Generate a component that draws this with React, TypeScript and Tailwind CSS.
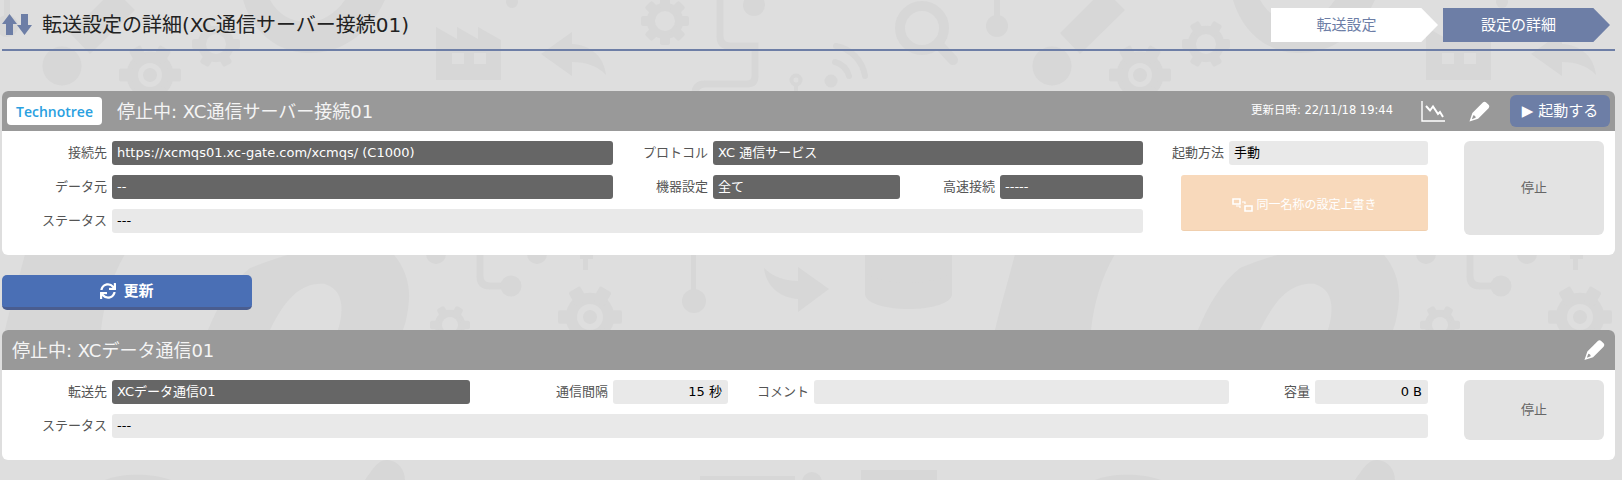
import type { ReactNode } from "react";
import { FaSync } from "react-icons/fa";

const FONT = "font-['DejaVu_Sans','Noto_Sans_CJK_JP',sans-serif]";

// 背景の透かし模様（横 990px で繰り返し）
function Gear({ x, y, r, hole, dot = 0, teeth = 6, rot = 0 }: { x: number; y: number; r: number; hole: number; dot?: number; teeth?: number; rot?: number }) {
  const w = r * 0.42;
  return (
    <g transform={`translate(${x} ${y})`}>
      <circle r={r * 0.76} fill="#d7d7d7" />
      {Array.from({ length: teeth }, (_, i) => (
        <rect
          key={i}
          x={-w / 2}
          y={-r}
          width={w}
          height={r * 0.5}
          rx={2}
          fill="#d7d7d7"
          transform={`rotate(${rot + (i * 360) / teeth})`}
        />
      ))}
      <circle r={hole} fill="#dedede" />
      {dot > 0 && <circle r={dot} fill="#d7d7d7" />}
    </g>
  );
}

function Tile() {
  return (
    <g fill="#d7d7d7" stroke="none">
      {/* 上段 */}
      <path d="M436 27 457 39V27L478 39V27L501 40V80H436Z" />
      <rect x="452" y="53" width="12" height="11" fill="#dedede" />
      <rect x="474" y="53" width="12" height="11" fill="#dedede" />
      <path d="M541 54 572 32V44C590 45 604 56 606 75 598 66 586 62 572 62V76Z" />
      <circle cx="512" cy="2" r="6" />
      <Gear x={665} y={21} r={24} hole={10} teeth={8} />
      <path d="M720 0V36Q720 46 730 46H755V76Q755 84 747 84H705Q695 84 695 94" fill="none" stroke="#d7d7d7" strokeWidth="7" />
      <circle cx="754" cy="5" r="11" />
      <circle cx="796" cy="80" r="6.5" />
      <circle cx="796" cy="80" r="2.5" fill="#dedede" />
      <rect x="794" y="84" width="4" height="8" />
      <circle cx="831" cy="81" r="6.5" />
      <path d="M835 62A20 20 0 0 1 849 76M836 46A36 36 0 0 1 865 76" fill="none" stroke="#d7d7d7" strokeWidth="6" strokeLinecap="round" />
      <circle cx="922" cy="28" r="22" fill="none" stroke="#d7d7d7" strokeWidth="10" />
      <path d="M940 46 953 60" stroke="#d7d7d7" strokeWidth="10" strokeLinecap="round" />
      <circle cx="997" cy="26" r="11" />
      <rect x="994" y="0" width="6" height="20" />
      <path d="M70 33 103 0H125L135 10 90 54Z" />
      <circle cx="62" cy="66" r="19.5" />
      <Gear x={150} y={75} r={31} hole={12} dot={7} rot={30} />
      <Gear x={216} y={44} r={24} hole={10} rot={30} />
      <path d="M243 0C252 30 275 53 310 53 340 53 368 36 385 0H345C335 14 322 22 308 22 290 22 278 14 270 0Z" />
      {/* 中段 */}
      <path d="M5 330C12 300 20 275 25 254H125C110 280 104 305 101 330Z" />
      <path d="M250 268C285 254 320 245 345 245H385C403 262 410 280 409 300 408 312 406 322 403 330H338C344 310 344 290 325 284 300 282 285 300 270 330H208C218 305 232 282 250 268Z" />
      <circle cx="436" cy="254" r="10" />
      <circle cx="537" cy="254" r="10" />
      <path d="M480 254V276Q480 286 490 286H508" fill="none" stroke="#d7d7d7" strokeWidth="7" />
      <circle cx="511" cy="286" r="10.5" />
      <rect x="583" y="254" width="5" height="16" />
      <rect x="580" y="254" width="13" height="5" />
      <Gear x={450} y={325} r={20} hole={8} rot={30} />
      <Gear x={590} y={317} r={32} hole={13} dot={7} rot={30} />
      <rect x="691" y="254" width="5" height="40" />
      <circle cx="694" cy="301" r="12" />
      <path d="M-192 267-161 289-192 312V299C-210 298-224 286-226 268-218 276-206 281-192 281Z" transform="translate(990 0)" />
      <path d="M-125 240H-38V276C-48 287-115 287-125 276Z" transform="translate(990 0)" />
      <path d="M-125 273C-105 286-58 286-38 273V294C-38 303-58 309-81 309-105 309-125 303-125 294Z" transform="translate(990 0)" />
      {/* 下段 */}
      <path d="M365 480C372 470 378 460 386 460 398 460 405 470 405 480Z" />
      <rect x="700" y="476" width="95" height="5" />
      <circle cx="812" cy="482" r="10" />
      <rect x="-129" y="470" width="76" height="12" />
      <path d="M105 480C118 474 150 472 171 480Z" />
    </g>
  );
}

function Watermark() {
  return (
    <svg className="absolute inset-0 -z-10" width="1622" height="480" aria-hidden="true">
      <defs>
        <g id="tile">
          <Tile />
        </g>
      </defs>
      <use href="#tile" x="0" />
      <use href="#tile" x="990" />
      <use href="#tile" x="-990" />
    </svg>
  );
}

function PencilIcon({ className }: { className: string }) {
  return (
    <svg viewBox="0 0 22 22" className={className} fill="currentColor" aria-hidden="true">
      <path
        d="M14.5 1.5C15.5.5 17 .5 18 1.5L20.5 4C21.5 5 21.5 6.5 20.5 7.5L9.5 18.5.5 21.5 3.5 12.5ZM4.5 15 3 19 7 17.5C7 16 6 15 4.5 15Z"
        fillRule="evenodd"
      />
    </svg>
  );
}

function ChartIcon() {
  return (
    <svg viewBox="0 0 24 21" className="h-[21px] w-[24px] text-white" fill="none" stroke="currentColor" aria-hidden="true">
      <path d="M1 0V20H24" strokeWidth="1.4" />
      <path d="M5 5 9 9.5 12 5.5 17 13 19 11 22 16" strokeWidth="2" />
    </svg>
  );
}

function UngroupIcon() {
  return (
    <svg viewBox="0 0 21 14" className="h-[14px] w-[21px] text-white" fill="none" stroke="currentColor" strokeWidth="1.6" aria-hidden="true">
      <path d="M1 1H8V6H1ZM13 8H20V13H13Z" />
      <path d="M4 8H8V10M10 4H13V6" strokeWidth="1.2" />
    </svg>
  );
}

function Label({ width, children }: { width: string; children: ReactNode }) {
  return <span className={`${width} shrink-0 pr-[5px] text-right text-[13px] leading-[24px] text-[#555]`}>{children}</span>;
}

function Field({ width, dark, right, children }: { width: string; dark?: boolean; right?: boolean; children?: ReactNode }) {
  return (
    <span
      className={`${width} h-[24px] shrink-0 rounded-[3px] pl-[5px] pr-[6px] text-[13px] leading-[24px] ${
        dark ? "bg-[#666] text-white" : "bg-[#e9e9e9] text-black"
      } ${right ? "text-right" : ""}`}
    >
      {children}
    </span>
  );
}

function StopButton({ height }: { height: string }) {
  return (
    <div className={`${height} ml-[36px] flex w-[140px] items-center justify-center rounded-[6px] bg-[#e3e3e3] text-[13px] text-[#666]`}>
      停止
    </div>
  );
}

export default function App() {
  return (
    <div className={`${FONT} relative isolate h-[480px] w-full overflow-hidden bg-[#dedede]`}>
      <Watermark />

      {/* ページ見出し */}
      <header className="ml-[2px] mr-[7px] flex h-[51px] items-start justify-between border-b-2 border-[#6d7ea6]">
        <div className="flex h-[49px] items-center">
          <svg viewBox="0 0 30 21" className="h-[21px] w-[30px] text-[#6d7ea6]" fill="currentColor" aria-hidden="true">
            <path d="M7.5 0 15 10H11V21H4V10H0ZM22.5 21 30 11H26V0H19V11H15Z" />
          </svg>
          <h1 className="ml-[10px] text-[20px] font-normal text-[#222]">転送設定の詳細(XC通信サーバー接続01)</h1>
        </div>
        <nav className="mr-[5px] mt-[8px] flex gap-[5px] text-[15px]">
          <span className="flex h-[34px] w-[167px] items-center justify-center bg-white pr-[16px] text-[#6d7ea6] [clip-path:polygon(0_0,90%_0,100%_50%,90%_100%,0_100%)]">
            転送設定
          </span>
          <span className="flex h-[34px] w-[167px] items-center justify-center bg-[#6d7ea6] pr-[16px] text-white [clip-path:polygon(0_0,90%_0,100%_50%,90%_100%,0_100%)]">
            設定の詳細
          </span>
        </nav>
      </header>

      {/* 接続パネル */}
      <section className="ml-[2px] mr-[7px] mt-[40px] overflow-hidden rounded-[6px] bg-white">
        <div className="flex h-[40px] items-center bg-[#999] pl-[5px] pr-[5px]">
          <span className="flex h-[28px] w-[95px] items-center justify-center rounded-[4px] bg-white font-['Open_Sans',sans-serif] text-[14px] font-semibold text-[#29a0e0]">
            Technotree
          </span>
          <h2 className="ml-[15px] text-[18px] font-normal text-[#f4f4f4]">停止中: XC通信サーバー接続01</h2>
          <span className="ml-auto text-[11.5px] text-white">更新日時: 22/11/18 19:44</span>
          <span className="ml-[28px]">
            <ChartIcon />
          </span>
          <PencilIcon className="ml-[24px] h-[21px] w-[21px] text-white" />
          <button className="ml-[20px] h-[32px] w-[100px] rounded-[6px] bg-[#6d7ea6] text-[15px] text-white">▶ 起動する</button>
        </div>
        <div className="flex h-[124px] pt-[10px]">
          <div className="flex w-[1141px] shrink-0 flex-col gap-[10px]">
            <div className="flex">
              <Label width="w-[110px]">接続先</Label>
              <Field width="w-[501px]" dark>
                https://xcmqs01.xc-gate.com/xcmqs/ (C1000)
              </Field>
              <Label width="w-[100px]">プロトコル</Label>
              <Field width="w-[430px]" dark>
                XC 通信サービス
              </Field>
            </div>
            <div className="flex">
              <Label width="w-[110px]">データ元</Label>
              <Field width="w-[501px]" dark>
                --
              </Field>
              <Label width="w-[100px]">機器設定</Label>
              <Field width="w-[187px]" dark>
                全て
              </Field>
              <Label width="w-[100px]">高速接続</Label>
              <Field width="w-[143px]" dark>
                -----
              </Field>
            </div>
            <div className="flex">
              <Label width="w-[110px]">ステータス</Label>
              <Field width="w-[1031px]">---</Field>
            </div>
          </div>
          <div className="flex w-[285px] shrink-0 flex-col gap-[10px]">
            <div className="flex">
              <Label width="w-[86px]">起動方法</Label>
              <Field width="w-[199px]">手動</Field>
            </div>
            <div className="ml-[38px] flex h-[56px] w-[247px] items-center justify-center gap-[3px] rounded-[3px] border-b border-[#f0cfae] bg-[#f8d9bb] pt-[4px] text-[12px] text-white">
              <UngroupIcon />
              同一名称の設定上書き
            </div>
          </div>
          <StopButton height="h-[94px]" />
        </div>
      </section>

      {/* 更新ボタン */}
      <button className="ml-[2px] mt-[20px] flex h-[35px] w-[250px] items-center justify-center gap-[7px] rounded-[5px] border-b-[3px] border-[#4a5d8f] bg-[#4a6fb5] text-[15px] font-bold text-white">
        <FaSync className="h-[16px] w-[16px]" />
        更新
      </button>

      {/* 転送先パネル */}
      <section className="ml-[2px] mr-[7px] mt-[20px] overflow-hidden rounded-[6px] bg-white">
        <div className="flex h-[40px] items-center justify-between bg-[#999] pl-[10px] pr-[10px]">
          <h2 className="text-[18px] font-normal text-[#f4f4f4]">停止中: XCデータ通信01</h2>
          <PencilIcon className="h-[22px] w-[21px] text-white" />
        </div>
        <div className="flex h-[90px] pt-[10px]">
          <div className="flex w-[1426px] shrink-0 flex-col gap-[10px]">
            <div className="flex">
              <Label width="w-[110px]">転送先</Label>
              <Field width="w-[358px]" dark>
                XCデータ通信01
              </Field>
              <Label width="w-[143px]">通信間隔</Label>
              <Field width="w-[115px]" right>
                15 秒
              </Field>
              <Label width="w-[86px]">コメント</Label>
              <Field width="w-[415px]" />
              <Label width="w-[86px]">容量</Label>
              <Field width="w-[113px]" right>
                0 B
              </Field>
            </div>
            <div className="flex">
              <Label width="w-[110px]">ステータス</Label>
              <Field width="w-[1316px]">---</Field>
            </div>
          </div>
          <StopButton height="h-[60px]" />
        </div>
      </section>
    </div>
  );
}
